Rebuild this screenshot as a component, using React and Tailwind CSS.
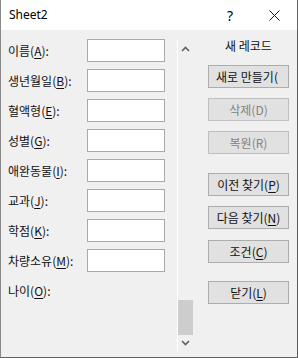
import React from 'react';

const fields = [
  { name: '이름', key: 'A' },
  { name: '생년월일', key: 'B' },
  { name: '혈액형', key: 'E' },
  { name: '성별', key: 'G' },
  { name: '애완동물', key: 'I' },
  { name: '교과', key: 'J' },
  { name: '학점', key: 'K' },
  { name: '차량소유', key: 'M' },
  { name: '나이', key: 'O', noInput: true },
];

// buttons on the right, mt = gap above each one
const buttons = [
  { label: '새로 만들기(', mt: 'mt-[11px]', align: 'left' },
  { label: '삭제', key: 'D', mt: 'mt-[10px]', disabled: true },
  { label: '복원', key: 'R', mt: 'mt-[10px]', disabled: true },
  { label: '이전 찾기', key: 'P', mt: 'mt-[19px]' },
  { label: '다음 찾기', key: 'N', mt: 'mt-[10px]' },
  { label: '조건', key: 'C', mt: 'mt-[11px]' },
  { label: '닫기', key: 'L', mt: 'mt-[18px]' },
];

const Mnemonic = ({ text, k, colon = false, underline = true }) => (
  <span>
    {text}(
    {underline ? <u className="underline-offset-[2px]">{k}</u> : k}
    ){colon ? ':' : ''}
  </span>
);

const Chevron = ({ up }) => (
  <svg width="9" height="6" viewBox="0 0 9 6" className="block">
    <polyline
      points={up ? '1,5 4.5,1.5 8,5' : '1,1 4.5,4.5 8,1'}
      fill="none"
      stroke="#606060"
      strokeWidth="1.6"
    />
  </svg>
);

export default function App() {
  return (
    <div
      className="w-[298px] h-[358px] flex flex-col bg-[#f0f0f0] border-l border-r border-b border-l-[#8a8a8a] border-r-[#5f5f5f] border-b-[#5f5f5f] overflow-hidden"
      style={{ fontFamily: '"Noto Sans CJK KR", "Noto Sans", sans-serif' }}
    >
      {/* Title bar */}
      <div className="h-[30px] shrink-0 bg-white flex items-center text-[12px] text-black">
        <span className="ml-[8px]" style={{ fontFamily: '"Noto Sans", sans-serif' }}>Sheet2</span>
        <span className="ml-auto mr-[36px] text-[14px]" style={{ fontFamily: '"Noto Sans", sans-serif' }}>?</span>
        <svg width="11" height="11" viewBox="0 0 11 11" className="mr-[17px]">
          <path d="M0.5 0.5 L10.5 10.5 M10.5 0.5 L0.5 10.5" stroke="#111" strokeWidth="1" />
        </svg>
      </div>

      {/* Body */}
      <div className="flex flex-1">
        {/* Form fields */}
        <div className="w-[176px] shrink-0 pt-[9px] pl-[7px] flex flex-col gap-[7px]">
          {fields.map((f) => (
            <div key={f.key} className="h-[23px] flex items-center">
              <div className="w-[79px] text-[12px] text-[#111] whitespace-nowrap leading-none">
                <Mnemonic text={f.name} k={f.key} colon />
              </div>
              {!f.noInput && (
                <div className="w-[78px] h-[23px] bg-white border border-[#a9a9a9]" />
              )}
            </div>
          ))}
        </div>

        {/* Scrollbar */}
        <div className="w-[16px] shrink-0 mt-[10px] mb-[6px] border-l border-white flex flex-col">
          <div className="h-[18px] flex items-center justify-center">
            <Chevron up />
          </div>
          <div className="flex-1 flex flex-col justify-end">
            <div className="h-[35px] bg-[#cdcdcd]" />
          </div>
          <div className="h-[16px] flex items-center justify-center">
            <Chevron />
          </div>
        </div>

        {/* Right command panel */}
        <div className="ml-[15px] w-[81px] shrink-0 pt-[8px] flex flex-col">
          <div className="h-[16px] text-[12px] text-[#111] text-center leading-[16px]">새 레코드</div>
          {buttons.map((b) => (
            <div
              key={b.label}
              className={`${b.mt} h-[23px] bg-[#e1e1e1] border border-[#adadad] flex items-center overflow-hidden whitespace-nowrap text-[12px] leading-none ${
                b.align === 'left' ? 'justify-start pl-[7px]' : 'justify-center'
              } ${b.disabled ? 'text-[#838383] border-[#bfbfbf]' : 'text-[#111]'}`}
            >
              {b.key ? <Mnemonic text={b.label} k={b.key} underline={!b.disabled} /> : b.label}
            </div>
          ))}
        </div>
      </div>
    </div>
  );
}
